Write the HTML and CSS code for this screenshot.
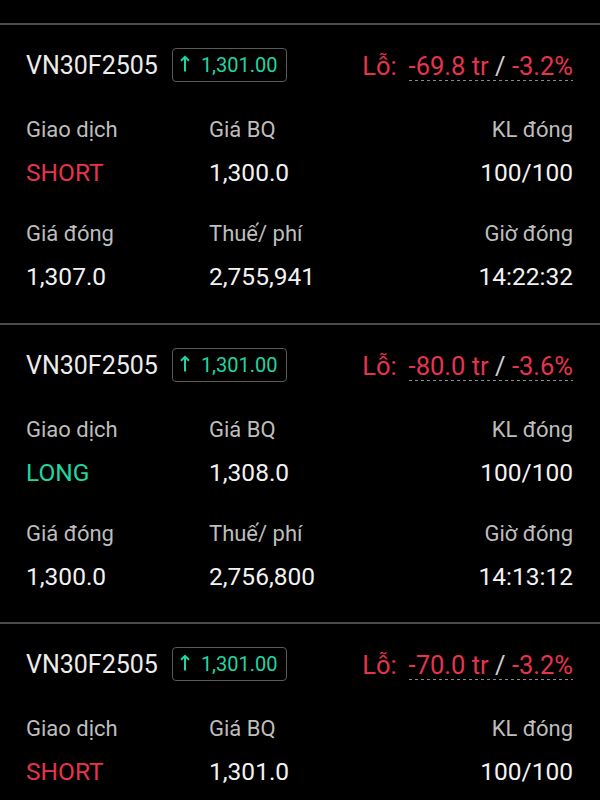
FILE: index.html
```html
<!DOCTYPE html>
<html lang="vi">
<head>
<meta charset="utf-8">
<link rel="stylesheet" href="styles.css">
</head>
<body>
<div class="list">
  <section class="card">
    <div class="head">
      <span class="sym">VN30F2505</span>
      <span class="badge"><svg class="arrow" viewBox="0 0 10 17" width="10" height="17"><path d="M5 16.5V1.8M1 5.8L5 1.8L9 5.8" fill="none" stroke="currentColor" stroke-width="2"/></svg><span>1,301.00</span></span>
      <span class="pnl"><span class="lbl">Lỗ:</span><span class="amt"><span class="neg">-69.8 tr</span> <span class="sl">/</span> <span class="neg">-3.2%</span></span></span>
    </div>
    <div class="grid">
      <div class="f"><div class="k">Giao dịch</div><div class="v short">SHORT</div></div>
      <div class="f"><div class="k">Giá BQ</div><div class="v">1,300.0</div></div>
      <div class="f r"><div class="k">KL đóng</div><div class="v">100/100</div></div>
      <div class="f"><div class="k">Giá đóng</div><div class="v">1,307.0</div></div>
      <div class="f"><div class="k">Thuế/ phí</div><div class="v">2,755,941</div></div>
      <div class="f r"><div class="k">Giờ đóng</div><div class="v">14:22:32</div></div>
    </div>
  </section>
  <section class="card">
    <div class="head">
      <span class="sym">VN30F2505</span>
      <span class="badge"><svg class="arrow" viewBox="0 0 10 17" width="10" height="17"><path d="M5 16.5V1.8M1 5.8L5 1.8L9 5.8" fill="none" stroke="currentColor" stroke-width="2"/></svg><span>1,301.00</span></span>
      <span class="pnl"><span class="lbl">Lỗ:</span><span class="amt"><span class="neg">-80.0 tr</span> <span class="sl">/</span> <span class="neg">-3.6%</span></span></span>
    </div>
    <div class="grid">
      <div class="f"><div class="k">Giao dịch</div><div class="v long">LONG</div></div>
      <div class="f"><div class="k">Giá BQ</div><div class="v">1,308.0</div></div>
      <div class="f r"><div class="k">KL đóng</div><div class="v">100/100</div></div>
      <div class="f"><div class="k">Giá đóng</div><div class="v">1,300.0</div></div>
      <div class="f"><div class="k">Thuế/ phí</div><div class="v">2,756,800</div></div>
      <div class="f r"><div class="k">Giờ đóng</div><div class="v">14:13:12</div></div>
    </div>
  </section>
  <section class="card last">
    <div class="head">
      <span class="sym">VN30F2505</span>
      <span class="badge"><svg class="arrow" viewBox="0 0 10 17" width="10" height="17"><path d="M5 16.5V1.8M1 5.8L5 1.8L9 5.8" fill="none" stroke="currentColor" stroke-width="2"/></svg><span>1,301.00</span></span>
      <span class="pnl"><span class="lbl">Lỗ:</span><span class="amt"><span class="neg">-70.0 tr</span> <span class="sl">/</span> <span class="neg">-3.2%</span></span></span>
    </div>
    <div class="grid">
      <div class="f"><div class="k">Giao dịch</div><div class="v short">SHORT</div></div>
      <div class="f"><div class="k">Giá BQ</div><div class="v">1,301.0</div></div>
      <div class="f r"><div class="k">KL đóng</div><div class="v">100/100</div></div>
    </div>
  </section>
</div>
</body>
</html>
```

FILE: styles.css
```css
html, body {
  margin: 0;
  padding: 0;
  background: #000;
}
body {
  font-family: Roboto, "Noto Sans", sans-serif;
  color: #f0f0f0;
  height: 800px;
  overflow: hidden;
}
.list {
  padding-top: 23px;
}
.card {
  border-top: 2px solid #4a4a4a;
  height: 300px;
  padding: 23px 27px 0 26px;
  box-sizing: border-box;
  overflow: hidden;
}
.card:nth-child(2) {
  height: 299px;
}
.card.last {
  height: 178px;
}
.head {
  display: flex;
  align-items: center;
  height: 34px;
}
.sym {
  font-size: 25px;
  color: #ececec;
  line-height: 34px;
  padding-top: 2px;
}
.badge {
  margin-left: 14px;
  height: 34px;
  box-sizing: border-box;
  border: 1.5px solid #5a5a5a;
  border-radius: 4px;
  display: flex;
  align-items: center;
  padding: 0 8px 0 7px;
  color: #1fd6a0;
  font-size: 20px;
}
.arrow {
  margin-right: 11px;
  margin-top: -4px;
}
.pnl {
  margin-left: auto;
  display: flex;
  align-items: baseline;
  font-size: 25.5px;
  line-height: 34px;
  padding-top: 2px;
}
.lbl {
  color: #e5344d;
  margin-right: 12px;
}
.amt {
  background-image: linear-gradient(to right, #8a8a8a 50%, transparent 50%);
  background-size: 6px 1px;
  background-repeat: repeat-x;
  background-position: 0 31px;
}
.neg {
  color: #e5344d;
}
.sl {
  color: #cfcfcf;
}
.grid {
  display: grid;
  grid-template-columns: 183px 1fr auto;
  row-gap: 31px;
  margin-top: 33px;
}
.f {
  display: flex;
  flex-direction: column;
  gap: 13px;
}
.f.r {
  text-align: right;
}
.k {
  font-size: 22px;
  line-height: 30px;
  color: #bdbdbd;
}
.v {
  font-size: 24.5px;
  line-height: 30px;
  color: #f2f2f2;
}
.v.short {
  color: #e5344d;
}
.v.long {
  color: #1fd6a0;
}
```
